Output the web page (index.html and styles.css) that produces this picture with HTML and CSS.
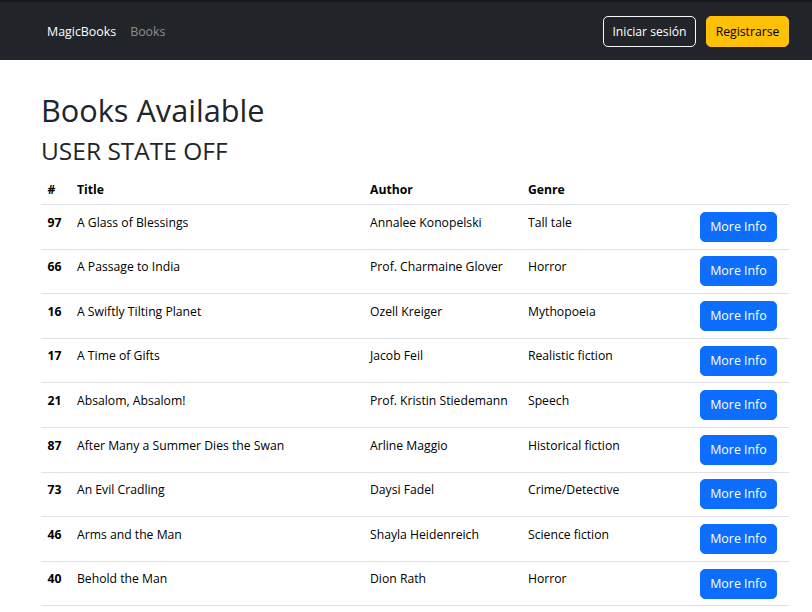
FILE: index.html
```html
<!DOCTYPE html>
<html lang="es">
<head>
<meta charset="utf-8">
<title>MagicBooks</title>
<link rel="stylesheet" href="styles.css">
</head>
<body>
<nav class="navbar">
  <div class="nav-left">
    <a class="brand" href="#">MagicBooks</a>
    <a class="nav-link" href="#">Books</a>
  </div>
  <div class="nav-right">
    <button class="btn btn-outline">Iniciar sesión</button>
    <button class="btn btn-warning">Registrarse</button>
  </div>
</nav>
<main class="content">
  <h1 class="title">Books Available</h1>
  <h2 class="subtitle">USER STATE OFF</h2>
  <table class="books">
    <colgroup>
      <col class="c-num"><col class="c-title"><col class="c-author"><col class="c-genre"><col class="c-action">
    </colgroup>
    <thead>
      <tr><th>#</th><th>Title</th><th>Author</th><th>Genre</th><th></th></tr>
    </thead>
    <tbody>
      <tr><th>97</th><td>A Glass of Blessings</td><td>Annalee Konopelski</td><td>Tall tale</td><td class="action"><button class="btn btn-primary">More Info</button></td></tr>
      <tr><th>66</th><td>A Passage to India</td><td>Prof. Charmaine Glover</td><td>Horror</td><td class="action"><button class="btn btn-primary">More Info</button></td></tr>
      <tr><th>16</th><td>A Swiftly Tilting Planet</td><td>Ozell Kreiger</td><td>Mythopoeia</td><td class="action"><button class="btn btn-primary">More Info</button></td></tr>
      <tr><th>17</th><td>A Time of Gifts</td><td>Jacob Feil</td><td>Realistic fiction</td><td class="action"><button class="btn btn-primary">More Info</button></td></tr>
      <tr><th>21</th><td>Absalom, Absalom!</td><td>Prof. Kristin Stiedemann</td><td>Speech</td><td class="action"><button class="btn btn-primary">More Info</button></td></tr>
      <tr><th>87</th><td>After Many a Summer Dies the Swan</td><td>Arline Maggio</td><td>Historical fiction</td><td class="action"><button class="btn btn-primary">More Info</button></td></tr>
      <tr><th>73</th><td>An Evil Cradling</td><td>Daysi Fadel</td><td>Crime/Detective</td><td class="action"><button class="btn btn-primary">More Info</button></td></tr>
      <tr><th>46</th><td>Arms and the Man</td><td>Shayla Heidenreich</td><td>Science fiction</td><td class="action"><button class="btn btn-primary">More Info</button></td></tr>
      <tr><th>40</th><td>Behold the Man</td><td>Dion Rath</td><td>Horror</td><td class="action"><button class="btn btn-primary">More Info</button></td></tr>
    </tbody>
  </table>
</main>
</body>
</html>
```
FILE: styles.css
```css
* { box-sizing: border-box; }
html, body { margin: 0; padding: 0; }
body {
  font-family: "Open Sans", "Noto Sans", sans-serif;
  font-size: 12.2px;
  line-height: 1.5;
  color: #212529;
  background: #fff;
  overflow: hidden;
}
.navbar {
  height: 60px;
  border-top: 2px solid #17191b;
  background: #212529;
  display: flex;
  align-items: center;
  justify-content: space-between;
  padding: 1px 23px 0 47px;
}
.nav-left { display: flex; align-items: center; gap: 14px; padding-top: 2px; }
.brand { color: #fff; text-decoration: none; font-size: 12.4px; }
.nav-link { color: #8c8e91; text-decoration: none; font-size: 12.4px; }
.nav-right { display: flex; gap: 10px; }
.btn {
  font-family: inherit;
  font-size: 12.2px;
  line-height: 18px;
  border-radius: 5px;
  border: 1px solid transparent;
  cursor: pointer;
  padding: 0;
  height: 31px;
}
.btn-outline { width: 93px; color: #fff; background: transparent; border-color: #f8f9fa; }
.btn-warning { width: 83px; color: #000; background: #ffc107; border-color: #ffc107; }
.btn-primary { width: 77px; height: 30px; color: #fff; background: #0d6efd; border-color: #0d6efd; display: block; font-size: 12.4px; }
.content { padding: 32.2px 23px 0 41px; }
.title {
  margin: 0 0 7.4px;
  font-size: 30.7px;
  line-height: 1.2;
  font-weight: 500;
}
.subtitle {
  margin: 0 0 7.4px;
  font-size: 24.5px;
  line-height: 1.2;
  font-weight: 500;
}
.books {
  width: 748px;
  border-collapse: collapse;
  table-layout: fixed;
  color: #000;
}
.c-num { width: 29.4px; }
.c-title { width: 293px; }
.c-author { width: 158px; }
.c-genre { width: 172px; }
.c-action { width: 95.6px; }
.books th, .books td {
  text-align: left;
  vertical-align: top;
  border-bottom: 1px solid #dee2e6;
  white-space: nowrap;
  padding-left: 6.6px;
  padding-right: 6.6px;
}
.books thead th {
  font-weight: 700;
  padding-top: 7.4px;
  padding-bottom: 4.6px;
  line-height: 18.8px;
}
.books tbody th, .books tbody td {
  padding-top: 7.6px;
  padding-bottom: 6px;
  line-height: 19.8px;
}
.books tbody td.action {
  padding-top: 6.8px;
  padding-bottom: 6.8px;
}
.books tbody th { font-weight: 700; }
```
